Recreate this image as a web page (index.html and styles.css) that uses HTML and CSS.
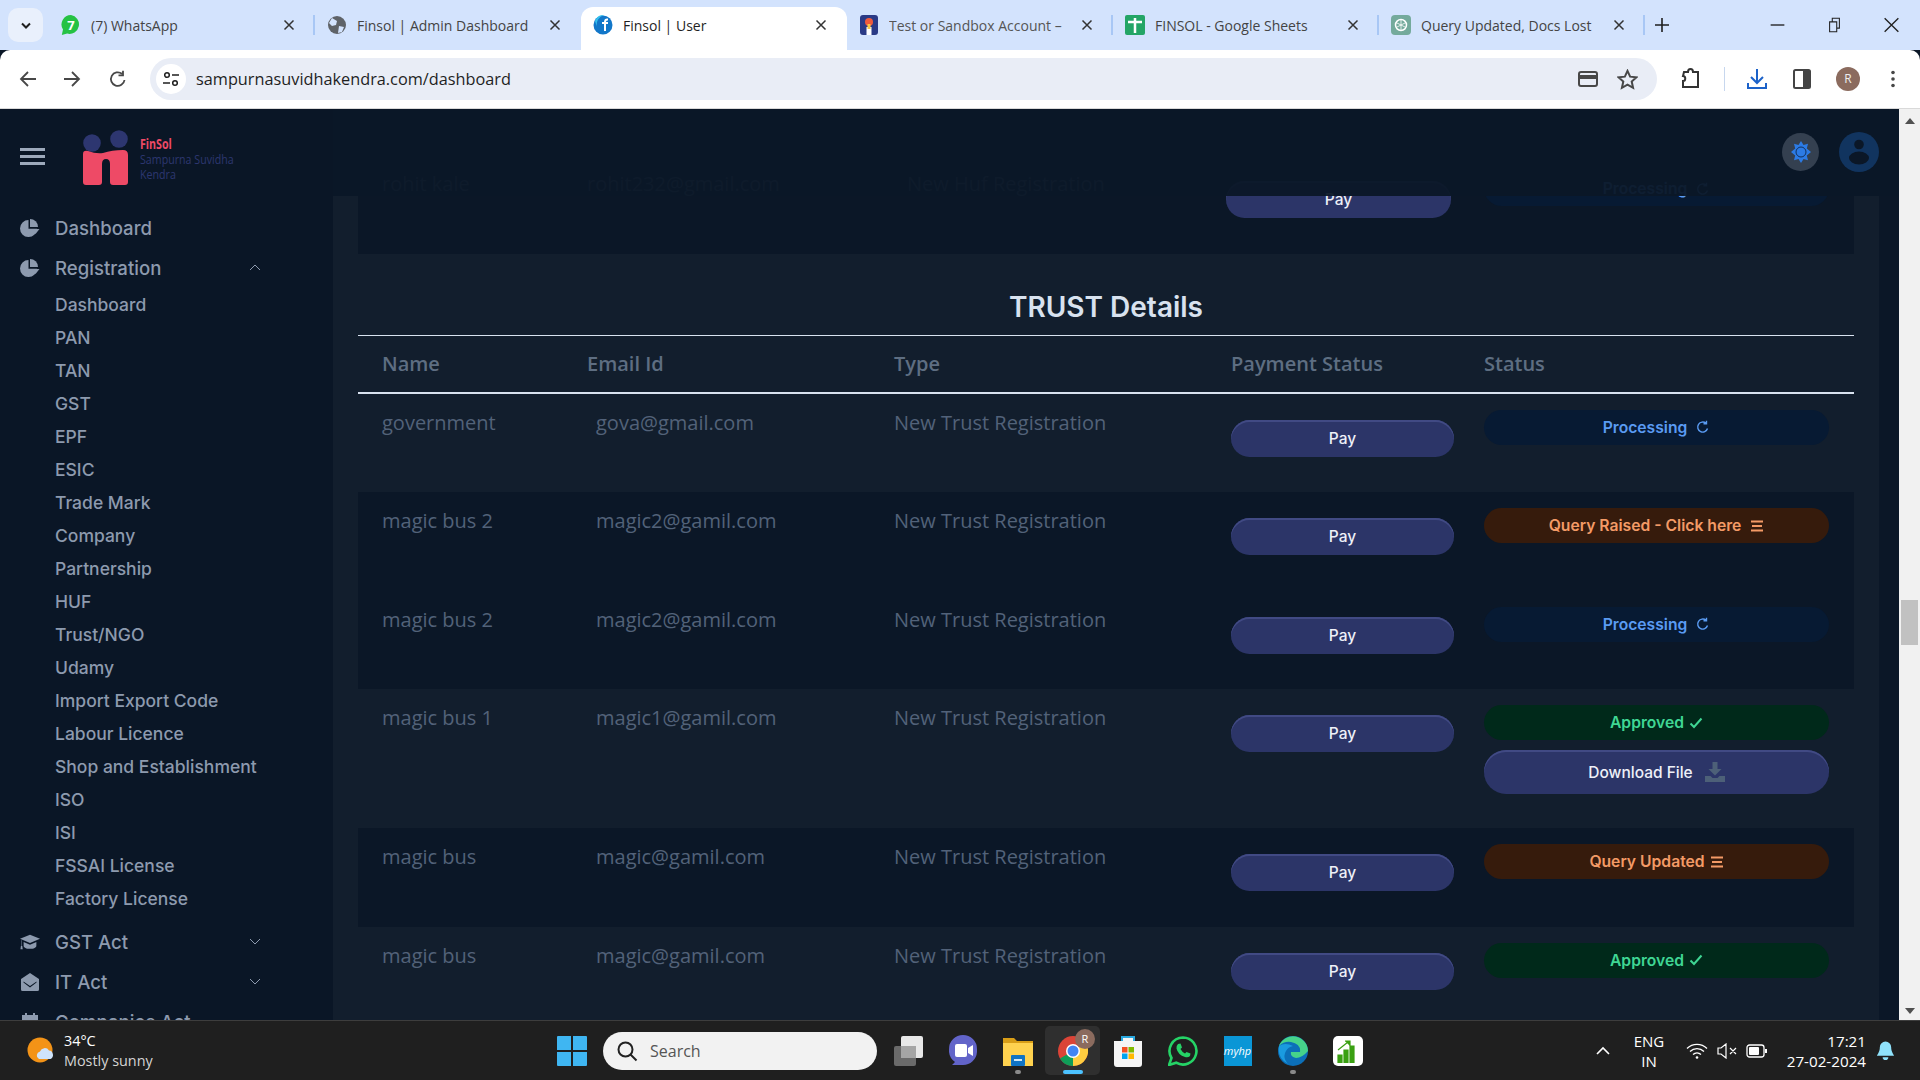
FILE: index.html
```html
<!DOCTYPE html>
<html lang="en">
<head>
    <meta charset="UTF-8">
    <meta name="viewport" content="width=device-width, initial-scale=1.0">
    <title>Finsol | User</title>
    <link rel="stylesheet" href="styles.css">
</head>
<body>
    <svg class="defs">
        <symbol id="i-pie" viewBox="0 0 20 18"><path d="M8.5 1A8.5 8.5 0 1 0 17 9.8H8.5z"/><path d="M10 0a8 8 0 0 1 8 8h-8z"/><path d="M11 10h8.500l-4 5z"/></symbol>
        <symbol id="i-x" viewBox="0 0 12 12"><path d="M1.500 1.500l9 9M10.500 1.500l-9 9" fill="none" stroke="currentColor" stroke-width="1.500"/></symbol>
        <symbol id="i-refresh" viewBox="0 0 14 14"><path d="M11.500 8.500A5 5 0 1 1 10 3.300M10.500 .8v3h-3" fill="none" stroke="currentColor" stroke-width="1.400"/></symbol>
        <symbol id="i-lines" viewBox="0 0 14 12"><path d="M1 1.500h12M2 6h10M1 10.500h12" fill="none" stroke="currentColor" stroke-width="2"/></symbol>
        <symbol id="i-check" viewBox="0 0 14 12"><path d="M1.500 6.500l3.500 3.500 7.500-8.500" fill="none" stroke="currentColor" stroke-width="2"/></symbol>
    </svg>

    <!-- Browser tabs -->
    <div class="tabstrip">
        <button class="tab-search"><svg width="12" height="8" viewBox="0 0 12 8"><path d="M2 1.500l4 4 4-4" fill="none" stroke="#1f1f1f" stroke-width="2"/></svg></button>
        <div class="tab sep">
            <svg class="favicon" viewBox="0 0 20 20"><path d="M10 0a9.500 9.500 0 0 0-8 14.600L.8 20l5.400-1.400A9.500 9.500 0 1 0 10 0z" fill="#25c244"/><text x="10" y="14.500" class="fav-num">7</text></svg>
            <span class="tab-title">(7) WhatsApp</span>
            <svg class="tab-close"><use href="#i-x"/></svg>
        </div>
        <div class="tab">
            <svg class="favicon" viewBox="0 0 20 20"><circle cx="10" cy="10" r="9" fill="#5f6368"/><path d="M5 3l5 3-1 4-4 1-3-3zM12 11l5 1-2 5-4 1z" fill="#d3e3fd"/></svg>
            <span class="tab-title">Finsol | Admin Dashboard</span>
            <svg class="tab-close"><use href="#i-x"/></svg>
        </div>
        <div class="tab active">
            <svg class="favicon" viewBox="0 0 20 20"><circle cx="10" cy="10" r="9.500" fill="#1277c9"/><path d="M2 6a9 9 0 0 1 9-6 10 10 0 0 0-7 12z" fill="#35c0ee"/><path d="M11 16V9H9V7h2c0-3 2-4 4-3.500v2c-1 0-2 0-2 1.500h2v2h-2v7z" fill="#fff"/></svg>
            <span class="tab-title">Finsol | User</span>
            <svg class="tab-close"><use href="#i-x"/></svg>
        </div>
        <div class="tab sep">
            <svg class="favicon" viewBox="0 0 20 20"><rect x="1" width="18" height="20" rx="3" fill="#2a3a86"/><circle cx="10" cy="7" r="4" fill="#ef5a3c"/><rect x="7.500" y="12" width="5" height="8" fill="#fff"/><rect x="8.500" y="9" width="3" height="5" fill="#f7c948"/></svg>
            <span class="tab-title tab-fade">Test or Sandbox Account –</span>
            <svg class="tab-close"><use href="#i-x"/></svg>
        </div>
        <div class="tab sep">
            <svg class="favicon" viewBox="0 0 20 20"><rect width="20" height="20" rx="2" fill="#23a566"/><path d="M3 7h14M10 3v15" stroke="#fff" stroke-width="2.500"/></svg>
            <span class="tab-title">FINSOL - Google Sheets</span>
            <svg class="tab-close"><use href="#i-x"/></svg>
        </div>
        <div class="tab sep">
            <svg class="favicon" viewBox="0 0 20 20"><rect width="20" height="20" rx="4" fill="#74aa9c"/><circle cx="10" cy="10" r="5.500" fill="none" stroke="#fff" stroke-width="1.500"/><path d="M10 4.500v11M5 7.500l10 5M15 7.500l-10 5" stroke="#fff" stroke-width=".8"/></svg>
            <span class="tab-title">Query Updated, Docs Lost</span>
            <svg class="tab-close"><use href="#i-x"/></svg>
        </div>
        <svg class="new-tab" viewBox="0 0 14 14"><path d="M7 0v14M0 7h14" stroke="#1f1f1f" stroke-width="1.600"/></svg>
        <div class="win-controls">
            <svg viewBox="0 0 14 14"><path d="M1 7h12" stroke="#222" stroke-width="1.200"/></svg>
            <svg viewBox="0 0 14 18"><path d="M1.500 5.500h8v11h-8zM4.500 5V1.500h8v11H10" fill="none" stroke="#222" stroke-width="1.200"/></svg>
            <svg viewBox="0 0 14 14"><path d="M1 1l12 12M13 1L1 13" stroke="#222" stroke-width="1.200"/></svg>
        </div>
    </div>

    <!-- Browser toolbar -->
    <div class="toolbar">
        <svg class="tb-back" viewBox="0 0 18 18"><path d="M9 2L2 9l7 7M2 9h15" fill="none" stroke="#474747" stroke-width="1.800"/></svg>
        <svg class="tb-forward" viewBox="0 0 18 18"><path d="M9 2l7 7-7 7M16 9H1" fill="none" stroke="#474747" stroke-width="1.800"/></svg>
        <svg class="tb-reload" viewBox="0 0 18 18"><path d="M15.500 10A6.800 6.800 0 1 1 13 3.800M14 .8v4.500H9.500" fill="none" stroke="#474747" stroke-width="1.800"/></svg>
        <div class="omnibox">
            <span class="site-info"><svg width="16" height="16" viewBox="0 0 16 16"><circle cx="4" cy="4" r="2.300" fill="none" stroke="#1f1f1f" stroke-width="1.500"/><circle cx="12" cy="12" r="2.300" fill="none" stroke="#1f1f1f" stroke-width="1.500"/><path d="M9 4h7M0 12h7" stroke="#1f1f1f" stroke-width="1.500"/></svg></span>
            <span class="url">sampurnasuvidhakendra.com/dashboard</span>
            <svg class="omni-card" viewBox="0 0 20 16"><rect x="1" y="1" width="18" height="14" rx="2" fill="none" stroke="#474747" stroke-width="2"/><rect x="1" y="4" width="18" height="4" fill="#474747"/></svg>
            <svg class="omni-star" viewBox="0 0 20 20"><path d="M10 1.800l2.500 5.500 6 .6-4.500 4 1.300 6L10 14.800 4.700 17.900l1.300-6-4.500-4 6-.6z" fill="none" stroke="#474747" stroke-width="1.900"/></svg>
        </div>
        <svg class="tb-ext" viewBox="0 0 20 24"><path d="M3 5h4c0-4 5-4 5 0h5v15H2v-6c3 0 3-5 0-5z" fill="none" stroke="#333" stroke-width="2"/></svg>
        <span class="tb-sep"></span>
        <svg class="tb-download" viewBox="0 0 20 22"><path d="M10 1v13M4 9l6 6 6-6M1 15v5h18v-5" fill="none" stroke="#1c62c9" stroke-width="2"/></svg>
        <svg class="tb-panel" viewBox="0 0 18 20"><rect x="1" y="1" width="16" height="18" rx="1.500" fill="none" stroke="#444" stroke-width="2"/><rect x="10" y="1" width="7" height="18" fill="#444"/></svg>
        <span class="tb-avatar">R</span>
        <svg class="tb-menu" viewBox="0 0 4 18"><circle cx="2" cy="2.500" r="1.800"/><circle cx="2" cy="9" r="1.800"/><circle cx="2" cy="15.500" r="1.800"/></svg>
    </div>

    <div class="app">
        <aside class="sidebar">
            <div class="brand">
                <div class="burger"><span></span><span></span><span></span></div>
                <svg class="logo" viewBox="0 0 45 55">
                    <circle cx="9" cy="13" r="8.800" fill="#2d3670"/>
                    <circle cx="36" cy="9" r="8.800" fill="#2d3670"/>
                    <path d="M0 24q0-4 5-3 8 3 15 2 9-3 20-3 5 0 5 5v27q0 3-3 3H30q-3 0-3-3V34q0-5-4-5-4 0-4 5v18q0 3-3 3H3q-3 0-3-3z" fill="#ee4a66"/>
                </svg>
                <div class="brand-text">
                    <span class="brand-name">FinSol</span>
                    <span>Sampurna Suvidha</span>
                    <span>Kendra</span>
                </div>
            </div>
            <nav class="nav">
                <a class="nav-item"><svg class="nav-icon"><use href="#i-pie"/></svg>Dashboard</a>
                <a class="nav-item">
                    <svg class="nav-icon"><use href="#i-pie"/></svg>Registration
                    <svg class="caret" viewBox="0 0 12 7"><path d="M1 6l5-5 5 5" fill="none" stroke="currentColor"/></svg>
                </a>
                <div class="sub-nav">
                    <a>Dashboard</a>
                    <a>PAN</a>
                    <a>TAN</a>
                    <a>GST</a>
                    <a>EPF</a>
                    <a>ESIC</a>
                    <a>Trade Mark</a>
                    <a>Company</a>
                    <a>Partnership</a>
                    <a>HUF</a>
                    <a>Trust/NGO</a>
                    <a>Udamy</a>
                    <a>Import Export Code</a>
                    <a>Labour Licence</a>
                    <a>Shop and Establishment</a>
                    <a>ISO</a>
                    <a>ISI</a>
                    <a>FSSAI License</a>
                    <a>Factory License</a>
                </div>
                <a class="nav-item">
                    <svg class="nav-icon" viewBox="0 0 22 16"><path d="M11 0L0 4.500 11 9l11-4.500z"/><path d="M4 8v4c0 2 3 3.500 7 3.500s7-1.500 7-3.500V8l-7 3zM1.500 6v6.500H1L.5 16h2.500L2.500 12.500H2V6z"/></svg>GST Act
                    <svg class="caret" viewBox="0 0 12 7"><path d="M1 1l5 5 5-5" fill="none" stroke="currentColor"/></svg>
                </a>
                <a class="nav-item">
                    <svg class="nav-icon" viewBox="0 0 18 18"><path d="M9 0L0 6v10.500Q0 18 1.500 18h15q1.500 0 1.500-1.500V6zM2.500 8.500L9 13l6.500-4.500v1L9 14.500l-6.500-5z"/></svg>IT Act
                    <svg class="caret" viewBox="0 0 12 7"><path d="M1 1l5 5 5-5" fill="none" stroke="currentColor"/></svg>
                </a>
                <a class="nav-item">
                    <svg class="nav-icon" viewBox="0 0 16 18"><path d="M3 0h2v2h6V0h2v2h3v16H0V2h3z"/></svg>Companies Act
                </a>
            </nav>
        </aside>

        <main class="main">
            <div class="topbar">
                <span class="round-btn settings">
                    <svg width="22" height="22" viewBox="0 0 22 22"><path d="M11 0l2.500 4 4.500-1.200L16.800 7.500 21 11l-4.200 3.500 1.200 4.700-4.500-1.200L11 22l-2.500-4-4.500 1.200 1.200-4.700L1 11l4.200-3.500L4 2.800l4.500 1.200z" fill="#2c7be5"/><circle cx="11" cy="11" r="5" fill="#2c7be5" stroke="#11305c" stroke-width="1"/></svg>
                </span>
                <span class="round-btn user">
                    <svg width="40" height="40" viewBox="0 0 40 40"><circle cx="20" cy="12.500" r="4.800" fill="#0b1727"/><ellipse cx="20" cy="26" rx="10" ry="6.500" fill="#0b1727"/></svg>
                </span>
            </div>

            <div class="scroll-area">
                <div class="card">
                    <div class="row row-dark row-prev">
                        <span>rohit kale</span>
                        <span>rohit232@gmail.com</span>
                        <span>New Huf Registration</span>
                        <span class="cell-pay"><button class="btn-pay">Pay</button></span>
                        <span class="cell-status"><span class="pill pill-blue">Processing <svg class="pill-icon"><use href="#i-refresh"/></svg></span></span>
                    </div>

                    <h2 class="card-title">TRUST Details</h2>

                    <div class="table-head">
                        <span>Name</span>
                        <span>Email Id</span>
                        <span>Type</span>
                        <span>Payment Status</span>
                        <span>Status</span>
                    </div>

                    <div class="row">
                        <span>government</span>
                        <span class="cell-email">gova@gmail.com</span>
                        <span>New Trust Registration</span>
                        <span class="cell-pay"><button class="btn-pay">Pay</button></span>
                        <span class="cell-status"><span class="pill pill-blue">Processing <svg class="pill-icon"><use href="#i-refresh"/></svg></span></span>
                    </div>
                    <div class="row row-dark">
                        <span>magic bus 2</span>
                        <span class="cell-email">magic2@gamil.com</span>
                        <span>New Trust Registration</span>
                        <span class="cell-pay"><button class="btn-pay">Pay</button></span>
                        <span class="cell-status"><span class="pill pill-orange">Query Raised - Click here <svg class="pill-icon"><use href="#i-lines"/></svg></span></span>
                    </div>
                    <div class="row row-dark">
                        <span>magic bus 2</span>
                        <span class="cell-email">magic2@gamil.com</span>
                        <span>New Trust Registration</span>
                        <span class="cell-pay"><button class="btn-pay">Pay</button></span>
                        <span class="cell-status"><span class="pill pill-blue">Processing <svg class="pill-icon"><use href="#i-refresh"/></svg></span></span>
                    </div>
                    <div class="row">
                        <span>magic bus 1</span>
                        <span class="cell-email">magic1@gamil.com</span>
                        <span>New Trust Registration</span>
                        <span class="cell-pay"><button class="btn-pay">Pay</button></span>
                        <span class="cell-status">
                            <span class="pill pill-green pill-tight">Approved <svg class="pill-icon"><use href="#i-check"/></svg></span>
                            <button class="btn-download">Download File
                                <svg width="20" height="20" viewBox="0 0 20 20"><path d="M7.500 0h5v7h4L10 13.500 3.500 7h4zM0 14h5.500l2 2h5l2-2H20v6H0z" fill="#4d6078"/></svg>
                            </button>
                        </span>
                    </div>
                    <div class="row row-dark">
                        <span>magic bus</span>
                        <span class="cell-email">magic@gamil.com</span>
                        <span>New Trust Registration</span>
                        <span class="cell-pay"><button class="btn-pay">Pay</button></span>
                        <span class="cell-status"><span class="pill pill-orange pill-tight">Query Updated <svg class="pill-icon"><use href="#i-lines"/></svg></span></span>
                    </div>
                    <div class="row">
                        <span>magic bus</span>
                        <span class="cell-email">magic@gamil.com</span>
                        <span>New Trust Registration</span>
                        <span class="cell-pay"><button class="btn-pay">Pay</button></span>
                        <span class="cell-status"><span class="pill pill-green pill-tight">Approved <svg class="pill-icon"><use href="#i-check"/></svg></span></span>
                    </div>
                </div>
            </div>
        </main>

        <div class="scrollbar">
            <span class="arrow-up"></span>
            <span class="thumb"></span>
            <span class="arrow-down"></span>
        </div>
    </div>

    <!-- Windows taskbar -->
    <footer class="taskbar">
        <div class="weather">
            <svg width="28" height="28" viewBox="0 0 28 28"><circle cx="13" cy="13" r="12.500" fill="#f39317"/><path d="M12 22a4 4 0 0 1 1-7.500 5 5 0 0 1 9-1 4.500 4.500 0 0 1 1.500 8.500z" fill="#cfe3fa"/></svg>
            <div class="weather-text">
                <span class="temp">34°C</span>
                <span>Mostly sunny</span>
            </div>
        </div>
        <span class="start">
            <svg width="30" height="30" viewBox="0 0 30 30"><path d="M0 1q0-1 1-1h13v14H0zM16 0h13q1 0 1 1v13H16zM0 16h14v14H1q-1 0-1-1zM16 16h14v13q0 1-1 1H16z" fill="#3fb6f2"/></svg>
        </span>
        <div class="search-box">
            <svg width="22" height="22" viewBox="0 0 22 22"><circle cx="9.500" cy="9.500" r="7" fill="none" stroke="#222" stroke-width="2"/><path d="M14.500 14.500l6 6" stroke="#222" stroke-width="2"/></svg>
            <span>Search</span>
        </div>
        <div class="apps">
            <span class="app-btn"><svg width="30" height="30" viewBox="0 0 30 30"><rect x="1" y="10" width="22" height="20" rx="2" fill="#6a6a6a"/><rect x="8" y="0" width="22" height="22" rx="2" fill="#e8e8e8"/><rect x="8" y="10" width="15" height="12" fill="#a5a5a5"/></svg></span>
            <span class="app-btn"><svg width="28" height="32" viewBox="0 0 28 32"><path d="M14 0a14 14 0 0 1 14 14v3a14 14 0 0 1-14 13H3l3-3a14 14 0 0 1-6-10v-3A14 14 0 0 1 14 0z" fill="#6264c9"/><rect x="6" y="9" width="12" height="13" rx="2" fill="#fff"/><path d="M19 13l5-3v11l-5-3z" fill="#fff"/></svg></span>
            <span class="app-btn running"><svg width="32" height="30" viewBox="0 0 32 30"><path d="M1 2h11l3 3h16v4H1z" fill="#d99e17"/><rect x="1" y="7" width="30" height="23" fill="#ffd24f"/><rect x="9" y="19" width="14" height="11" rx="1" fill="#0f73c4"/><rect x="12" y="23" width="8" height="2" fill="#cfe8f8"/></svg></span>
            <span class="app-btn active-app">
                <svg width="30" height="30" viewBox="0 0 30 30"><circle cx="15" cy="15" r="15" fill="#db4437"/><path d="M15 15L2 22.500A15 15 0 0 0 15 30z" fill="#0f9d58"/><path d="M15 15l13-7.500A15 15 0 0 1 15 30z" fill="#ffcd40"/><circle cx="15" cy="15" r="7" fill="#fff"/><circle cx="15" cy="15" r="5.500" fill="#4285f4"/></svg>
                <span class="badge-r">R</span>
            </span>
            <span class="app-btn"><svg width="30" height="32" viewBox="0 0 30 32"><path d="M9 1h12l1 5h7v23q0 3-3 3H4q-3 0-3-3V6h7z" fill="#f5f5f5"/><path d="M9 6V2h12v4" fill="none" stroke="#29a9e0" stroke-width="2"/><rect x="9" y="12" width="5.500" height="5.500" fill="#f25022"/><rect x="15.500" y="12" width="5.500" height="5.500" fill="#7fba00"/><rect x="9" y="18.500" width="5.500" height="5.500" fill="#00a4ef"/><rect x="15.500" y="18.500" width="5.500" height="5.500" fill="#ffb900"/></svg></span>
            <span class="app-btn"><svg width="30" height="30" viewBox="0 0 30 30"><path d="M15 1.500a13.500 13.500 0 0 0-11.500 20.500L1 29l7.200-2.300A13.500 13.500 0 1 0 15 1.500z" fill="none" stroke="#25d366" stroke-width="2.600"/><path d="M10 8l2.500-.5 1.500 4-1.500 1.500q1.500 3 4.500 4.500l1.500-1.500 4 1.500-.5 2.500q-2 2-5 1Q10 19 8.500 12.500 8 10 10 8z" fill="#25d366"/></svg></span>
            <span class="app-btn"><span class="myhp">myhp</span></span>
            <span class="app-btn running"><svg width="30" height="30" viewBox="0 0 30 30"><circle cx="15" cy="15" r="15" fill="#0c6fb8"/><path d="M30 15a15 15 0 0 0-29-5q5-5 12-4 10 2 9 10h-9q-1 5 5 6 6 0 12-7z" fill="#46d38a"/><path d="M1 10Q-1 22 10 28q-6-7-2-13 2-4 7-5-8-4-14 0z" fill="#1a9be0"/></svg></span>
            <span class="app-btn"><span class="stocks"><svg width="22" height="24" viewBox="0 0 22 24"><path d="M1 24v-8h4v8zM7 24V11h4v13zM13 24V7h4v17zM1 11L11 3M8 2h5v5" fill="#3aa012" stroke="#3aa012" stroke-width="1.200"/></svg></span></span>
        </div>
        <div class="tray">
            <svg class="tray-up" viewBox="0 0 16 10"><path d="M2 8l6-6 6 6" fill="none" stroke="#fff" stroke-width="1.600"/></svg>
            <div class="lang"><span>ENG</span><span>IN</span></div>
            <svg class="tray-wifi" viewBox="0 0 22 16"><path d="M1 5.500a14 14 0 0 1 20 0M4 8.500a10 10 0 0 1 14 0M7 11.500a6 6 0 0 1 8 0" fill="none" stroke="#fff" stroke-width="1.300"/><circle cx="11" cy="14.500" r="1.300" fill="#fff"/></svg>
            <svg class="tray-sound" viewBox="0 0 20 16"><path d="M1 5h3l5-4v14l-5-4H1zM13 5l6 6M19 5l-6 6" fill="none" stroke="#fff" stroke-width="1.200"/></svg>
            <svg class="tray-battery" viewBox="0 0 22 14"><rect x="1" y="1" width="17" height="12" rx="2.500" fill="none" stroke="#fff" stroke-width="1.300"/><rect x="3" y="3" width="10" height="8" rx="1" fill="#fff"/><rect x="19" y="5" width="2" height="4" fill="#fff"/></svg>
            <div class="clock"><span>17:21</span><span>27-02-2024</span></div>
            <svg class="tray-bell" viewBox="0 0 18 20"><path d="M9 0a6 6 0 0 1 6 6c0 5 3 8 3 9H0c0-1 3-4 3-9a6 6 0 0 1 6-6z" fill="#8fe2fb"/><path d="M6 16.500h6a3 3 0 0 1-6 0z" fill="#8fe2fb"/></svg>
        </div>
    </footer>
</body>
</html>
```
FILE: styles.css
```css
/* General Styles */
* {
    box-sizing: border-box;
}

html, body {
    height: 100%;
}

body {
    margin: 0;
    display: flex;
    flex-direction: column;
    height: 1080px;
    overflow: hidden;
    font-family: "Open Sans", sans-serif;
    background: #0b1727;
}

.defs {
    width: 0;
    height: 0;
    position: absolute;
}

button {
    font-family: inherit;
    border: none;
}

/* Browser tabs */
.tabstrip {
    height: 50px;
    flex: none;
    display: flex;
    align-items: flex-start;
    padding-left: 8px;
    background: #d3e3fd;
}

.tab-search {
    width: 35px;
    height: 34px;
    margin: 8px 6px 0 0;
    padding: 0;
    border-radius: 10px;
    background: #e9f0fc;
}

.tab {
    position: relative;
    width: 266px;
    height: 43px;
    margin-top: 7px;
    padding: 0 20px 7px 12px;
    display: flex;
    align-items: center;
    gap: 10px;
    color: #444;
    font: 14px "Open Sans", sans-serif;
}

.tab.sep::after {
    content: '';
    position: absolute;
    right: 0;
    top: 8px;
    height: 20px;
    width: 2px;
    background: #a8c7f5;
}

.tab.active {
    background: #fff;
    color: #1f1f1f;
    border-radius: 12px 12px 0 0;
}

.favicon {
    width: 20px;
    height: 20px;
    flex: none;
}

.fav-num {
    font: bold 13px "Open Sans", sans-serif;
    fill: #fff;
    text-anchor: middle;
}

.tab-title {
    flex: 1;
    white-space: nowrap;
    overflow: hidden;
}

.tab-fade {
    color: #555;
}

.tab-close {
    width: 12px;
    height: 12px;
    flex: none;
    color: #333;
}

.new-tab {
    width: 14px;
    height: 14px;
    margin: 18px 0 0 10px;
}

.win-controls {
    margin-left: auto;
    display: flex;
}

.win-controls svg {
    width: 57px;
    height: 16px;
    margin-top: 17px;
}

/* Browser toolbar */
.toolbar {
    height: 59px;
    flex: none;
    display: flex;
    align-items: center;
    background: #fff;
    border-bottom: 1px solid #d9d9d9;
    border-radius: 10px 10px 0 0;
}

.toolbar > svg {
    flex: none;
}

.tb-back {
    width: 18px;
    height: 18px;
    margin-left: 19px;
}

.tb-forward {
    width: 18px;
    height: 18px;
    margin-left: 26px;
}

.tb-reload {
    width: 18px;
    height: 18px;
    margin-left: 28px;
}

.omnibox {
    width: 1507px;
    height: 42px;
    margin-left: 23px;
    padding-left: 6px;
    display: flex;
    align-items: center;
    background: #e9edf6;
    border-radius: 21px;
}

.site-info {
    width: 30px;
    height: 30px;
    display: flex;
    align-items: center;
    justify-content: center;
    background: #fff;
    border-radius: 50%;
}

.url {
    margin-left: 10px;
    font-size: 16.3px;
    color: #1f1f1f;
}

.omni-card {
    width: 20px;
    height: 16px;
    margin-left: auto;
}

.omni-star {
    width: 21px;
    height: 21px;
    margin: 0 19px 0 19px;
}

.tb-ext {
    width: 20px;
    height: 24px;
    margin-left: 24px;
}

.tb-sep {
    width: 1px;
    height: 24px;
    margin-left: 23px;
    background: #c7d7ee;
}

.tb-download {
    width: 20px;
    height: 22px;
    margin-left: 22px;
}

.tb-panel {
    width: 18px;
    height: 20px;
    margin-left: 26px;
}

.tb-avatar {
    width: 24px;
    height: 24px;
    margin-left: 25px;
    border-radius: 50%;
    background: #8b6b5e;
    color: #eee;
    font-size: 12px;
    line-height: 24px;
    text-align: center;
}

.tb-menu {
    width: 4px;
    height: 18px;
    margin-left: 31px;
    fill: #474747;
}

/* Page */
.app {
    flex: 1;
    min-height: 0;
    display: flex;
}

.sidebar {
    width: 333px;
    flex: none;
    overflow: hidden;
    background: #0a1626;
}

.brand {
    height: 87px;
    padding: 8px 0 0 20px;
    display: flex;
    align-items: center;
}

.burger {
    width: 25px;
    display: flex;
    flex-direction: column;
    gap: 4px;
}

.burger span {
    height: 3px;
    background: #9da9bb;
}

.logo {
    width: 45px;
    height: 55px;
    margin: 2px 0 0 38px;
}

.brand-text {
    margin: 6px 0 0 12px;
    display: flex;
    flex-direction: column;
    font-size: 13.5px;
    line-height: 15px;
    color: #2d3670;
    white-space: nowrap;
    transform: scaleX(0.79);
    transform-origin: left center;
}

.brand-name {
    color: #ee4a66;
    font-weight: 700;
}

.nav {
    padding-top: 12px;
    font-family: Inter, sans-serif;
    font-weight: 500;
    color: #8d9aae;
}

.nav-item {
    position: relative;
    height: 40px;
    padding-left: 55px;
    display: flex;
    align-items: center;
    font-size: 18.6px;
}

.nav-icon {
    position: absolute;
    left: 20px;
    top: 11px;
    width: 20px;
    height: 18px;
    fill: currentColor;
}

.caret {
    position: absolute;
    left: 249px;
    top: 16px;
    width: 12px;
    height: 7px;
}

.sub-nav {
    margin-bottom: 7px;
}

.sub-nav a {
    display: block;
    height: 33px;
    padding-left: 55px;
    font-size: 17.5px;
    line-height: 33px;
}

.main {
    flex: 1;
    position: relative;
    overflow: hidden;
    min-width: 0;
    background: #0b1727;
}

.topbar {
    position: absolute;
    top: 0;
    left: 0;
    right: 0;
    height: 87px;
    z-index: 2;
    padding: 23px 20px 0 0;
    display: flex;
    justify-content: flex-end;
    align-items: flex-start;
    gap: 20px;
    background: rgba(11, 23, 39, 0.95);
}

.round-btn {
    border-radius: 50%;
    display: flex;
    align-items: center;
    justify-content: center;
}

.settings {
    width: 37px;
    height: 38px;
    margin-top: 1px;
    background: #344050;
}

.user {
    width: 40px;
    height: 40px;
    background: #11345f;
}

/* Table stays scrolled, first row sits partly under the top bar */
.scroll-area {
    width: 1546px;
    height: 100%;
    padding-top: 46px;
    background: #121e2d;
}

.card {
    padding: 0 25px;
}

.card-title {
    margin: 0;
    height: 82px;
    padding-top: 30px;
    text-align: center;
    font: 600 28px/46px Inter, sans-serif;
    color: #d8e2ef;
    border-bottom: 1px solid #d8e2ef;
}

.table-head,
.row {
    display: grid;
    grid-template-columns: 205px 307px 337px 253px 370px;
    padding-left: 24px;
    font-size: 20px;
}

.table-head {
    height: 58px;
    align-items: center;
    font-weight: 600;
    color: #5e6e82;
    border-bottom: 2px solid #d8e2ef;
}

.row {
    height: 98.5px;
    color: #526279;
    line-height: 25px;
    padding-top: 16px;
}

/* row above the title has its own column widths */
.row.row-prev {
    grid-template-columns: 205px 320px 319px 258px 370px;
}

.row-prev .btn-pay {
    width: 225px;
}

.row-dark {
    background: #0b1727;
}

.row:has(.btn-download) {
    height: 139px;
}

.cell-email {
    padding-left: 9px;
}

.cell-pay {
    padding-top: 10px;
}

.cell-status {
    display: flex;
    flex-direction: column;
    gap: 10px;
    width: 345px;
}

.btn-pay,
.btn-download {
    display: flex;
    align-items: center;
    justify-content: center;
    gap: 12px;
    background: #2c3568;
    box-shadow: inset 0 2px 0 #414a84;
    color: #eef0f8;
    font: 500 15.5px Inter, sans-serif;
    border-radius: 19px;
}

.btn-pay {
    width: 223px;
    height: 37px;
}

.btn-download {
    width: 345px;
    height: 44px;
    border-radius: 22px;
}

.pill {
    height: 35px;
    display: flex;
    align-items: center;
    justify-content: center;
    gap: 9px;
    border-radius: 18px;
    font: 600 15.7px Inter, sans-serif;
}

.pill-tight {
    gap: 5px;
}

.pill-icon {
    width: 14px;
    height: 14px;
}

.pill-blue {
    background: #071a33;
    color: #5a9bf2;
}

.pill-orange {
    background: #361b0c;
    color: #f39a66;
}

.pill-green {
    background: #00291a;
    color: #3fd694;
}

.scrollbar {
    position: relative;
    width: 21px;
    flex: none;
    background: #f1f1f1;
}

.thumb {
    position: absolute;
    top: 491px;
    left: 2px;
    width: 17px;
    height: 45px;
    background: #c1c1c1;
}

.arrow-up,
.arrow-down {
    position: absolute;
    left: 6px;
    width: 0;
    height: 0;
    border-left: 5px solid transparent;
    border-right: 5px solid transparent;
}

.arrow-up {
    top: 9px;
    border-bottom: 6px solid #505050;
}

.arrow-down {
    bottom: 6px;
    border-top: 6px solid #505050;
}

/* Windows taskbar */
.taskbar {
    height: 60px;
    flex: none;
    display: flex;
    align-items: center;
    background: #1f1f1f;
    border-top: 1px solid #3d3d3d;
    color: #fff;
}

.weather {
    width: 544px;
    padding-left: 27px;
    display: flex;
    align-items: center;
    gap: 9px;
}

.weather-text {
    display: flex;
    flex-direction: column;
    font-size: 14.4px;
    line-height: 20px;
    color: #d5d5d5;
}

.temp {
    color: #fff;
}

.start {
    width: 55px;
    display: flex;
    justify-content: center;
}

.search-box {
    width: 274px;
    height: 38px;
    margin-left: 4px;
    padding-left: 13px;
    display: flex;
    align-items: center;
    gap: 12px;
    background: #f2f2f2;
    border-radius: 19px;
    color: #555;
    font-size: 16px;
}

.apps {
    margin-left: 3px;
    display: flex;
}

.app-btn {
    position: relative;
    width: 55px;
    height: 49px;
    display: flex;
    align-items: center;
    justify-content: center;
}

.running::after,
.active-app::after {
    content: '';
    position: absolute;
    bottom: 1px;
    left: 50%;
    width: 6px;
    height: 4px;
    margin-left: -3px;
    border-radius: 2px;
    background: #8a8a8a;
}

.active-app {
    background: #2f2f2f;
    border-radius: 5px;
}

.active-app::after {
    width: 20px;
    margin-left: -10px;
    background: #4cc2ff;
}

.badge-r {
    position: absolute;
    top: 3px;
    right: 5px;
    width: 20px;
    height: 20px;
    border-radius: 50%;
    background: #8b6b5e;
    font-size: 11px;
    line-height: 20px;
    text-align: center;
}

.myhp {
    width: 28px;
    height: 30px;
    background: #0a96d6;
    font-size: 11px;
    font-style: italic;
    line-height: 30px;
    text-align: center;
}

.stocks {
    width: 30px;
    height: 30px;
    display: flex;
    align-items: center;
    justify-content: center;
    background: #fff;
    border-radius: 5px;
}

.tray {
    margin-left: auto;
    display: flex;
    align-items: center;
    padding-right: 26px;
}

.tray-up {
    width: 16px;
    height: 10px;
}

.lang {
    width: 40px;
    margin-left: 18px;
    display: flex;
    flex-direction: column;
    text-align: center;
    font-size: 15px;
    line-height: 20px;
}

.tray-wifi {
    width: 22px;
    height: 16px;
    margin-left: 17px;
}

.tray-sound {
    width: 20px;
    height: 16px;
    margin-left: 9px;
}

.tray-battery {
    width: 22px;
    height: 14px;
    margin-left: 9px;
}

.clock {
    width: 84px;
    margin-left: 14px;
    display: flex;
    flex-direction: column;
    text-align: right;
    font-size: 15.2px;
    line-height: 20px;
}

.tray-bell {
    width: 17px;
    height: 20px;
    margin-left: 11px;
}
```
